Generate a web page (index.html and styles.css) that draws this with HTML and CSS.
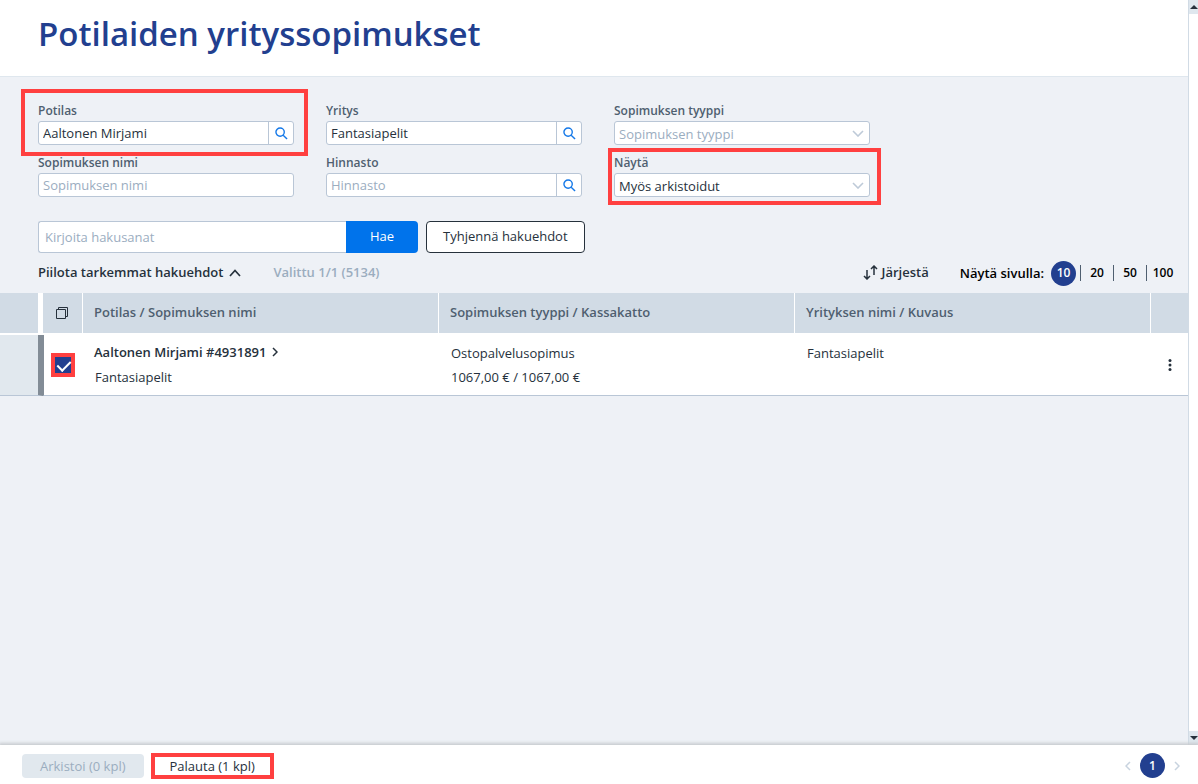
FILE: index.html
```html
<!DOCTYPE html>
<html lang="fi">
<head>
<meta charset="utf-8">
<meta name="viewport" content="width=device-width, initial-scale=1">
<title>Potilaiden yrityssopimukset</title>
<link rel="stylesheet" href="styles.css">
</head>
<body>
<div class="app">
  <div class="viewport">
    <main class="page">
      <header class="page-header"><h1 class="page-title">Potilaiden yrityssopimukset</h1></header>

      <form class="filters">
        <div class="field-grid">
          <div class="field field-marked-patient">
            <label class="field-label" for="patient">Potilas</label>
            <div class="lookup">
              <input class="lookup-input" id="patient" type="text" value="Aaltonen Mirjami">
              <button class="lookup-button" type="button" aria-label="Hae potilas"><svg class="icon-search" viewBox="0 0 14 14"><circle cx="5.5" cy="5.5" r="4.5"/><path d="M8.8 8.8 13 13"/></svg></button>
            </div>
          </div>
          <div class="field">
            <label class="field-label" for="company">Yritys</label>
            <div class="lookup">
              <input class="lookup-input" id="company" type="text" value="Fantasiapelit">
              <button class="lookup-button" type="button" aria-label="Hae yritys"><svg class="icon-search" viewBox="0 0 14 14"><circle cx="5.5" cy="5.5" r="4.5"/><path d="M8.8 8.8 13 13"/></svg></button>
            </div>
          </div>
          <div class="field">
            <label class="field-label" for="type">Sopimuksen tyyppi</label>
            <div class="lookup">
              <select class="select is-empty" id="type"><option>Sopimuksen tyyppi</option></select>
              <svg class="select-arrow" viewBox="0 0 12 7"><path d="M1 1l5 5 5-5"/></svg>
            </div>
          </div>
          <div class="field">
            <label class="field-label" for="name">Sopimuksen nimi</label>
            <div class="lookup"><input class="lookup-input" id="name" type="text" placeholder="Sopimuksen nimi"></div>
          </div>
          <div class="field">
            <label class="field-label" for="pricelist">Hinnasto</label>
            <div class="lookup">
              <input class="lookup-input" id="pricelist" type="text" placeholder="Hinnasto">
              <button class="lookup-button" type="button" aria-label="Hae hinnasto"><svg class="icon-search" viewBox="0 0 14 14"><circle cx="5.5" cy="5.5" r="4.5"/><path d="M8.8 8.8 13 13"/></svg></button>
            </div>
          </div>
          <div class="field field-marked-show">
            <label class="field-label" for="show">Näytä</label>
            <div class="lookup">
              <select class="select" id="show"><option>Myös arkistoidut</option></select>
              <svg class="select-arrow" viewBox="0 0 12 7"><path d="M1 1l5 5 5-5"/></svg>
            </div>
          </div>
        </div>

        <div class="search-row">
          <input class="search-input" type="text" placeholder="Kirjoita hakusanat" aria-label="Hakusanat">
          <button class="button-search" type="button">Hae</button>
          <button class="button-clear" type="button">Tyhjennä hakuehdot</button>
        </div>

        <div class="toolbar">
          <button class="text-button" type="button">Piilota tarkemmat hakuehdot
            <svg class="icon-up" viewBox="0 0 12 8"><path d="M1 7l5-5.500 5 5.500"/></svg>
          </button>
          <span class="selected-count">Valittu 1/1 (5134)</span>
          <button class="text-button sort-button" type="button">
            <svg class="icon-sort" viewBox="0 0 15 15"><path d="M4 5v9M1 11l3 3 3-3M11 10V1M8 4l3-3 3 3"/></svg>Järjestä</button>
          <div class="page-size">
            <span class="page-size-label">Näytä sivulla:</span>
            <button class="round-button" type="button">10</button>
            <button class="size-button" type="button">20</button>
            <button class="size-button" type="button">50</button>
            <button class="size-button" type="button">100</button>
          </div>
        </div>
      </form>

      <table class="contracts">
        <colgroup><col class="col-edge"><col class="col-check"><col><col><col><col class="col-menu"></colgroup>
        <thead>
          <tr>
            <th class="head-edge"></th>
            <th class="head-check"><button class="icon-button" type="button" aria-label="Valitse kaikki"><svg class="icon-copy" viewBox="0 0 12 12"><path d="M.5 2.500h9v9h-9zM2.500 2.500v-2h9v9h-2"/></svg></button></th>
            <th>Potilas / Sopimuksen nimi</th>
            <th>Sopimuksen tyyppi / Kassakatto</th>
            <th>Yrityksen nimi / Kuvaus</th>
            <th class="head-menu"></th>
          </tr>
        </thead>
        <tbody>
          <tr>
            <td class="row-edge"></td>
            <td class="row-check"><input class="checkbox" type="checkbox" checked aria-label="Valitse Aaltonen Mirjami"></td>
            <td><a class="patient-link" href="#">Aaltonen Mirjami #4931891<svg class="icon-next" viewBox="0 0 6 10"><path d="M1 1l4 4-4 4"/></svg></a><div class="line">Fantasiapelit</div></td>
            <td><div class="line">Ostopalvelusopimus</div><div class="line">1067,00 € / 1067,00 €</div></td>
            <td><div class="line">Fantasiapelit</div></td>
            <td class="row-menu"><button class="icon-button" type="button" aria-label="Toiminnot"><svg class="icon-dots" viewBox="0 0 4 14"><circle cx="2" cy="2.500" r="1.500"/><circle cx="2" cy="7" r="1.500"/><circle cx="2" cy="11.500" r="1.500"/></svg></button></td>
          </tr>
        </tbody>
      </table>
    </main>
    <div class="scrollbar" aria-hidden="true">
      <div class="scroll-end"><svg class="scroll-arrow" viewBox="0 0 8 4"><path d="M0 4l4-4 4 4z"/></svg></div>
      <div class="scroll-end"><svg class="scroll-arrow" viewBox="0 0 8 4"><path d="M0 0l4 4 4-4z"/></svg></div>
    </div>
  </div>

  <footer class="footer">
    <button class="button-archive" type="button" disabled>Arkistoi (0 kpl)</button>
    <button class="button-restore" type="button">Palauta (1 kpl)</button>
    <nav class="pager" aria-label="Sivut">
      <button class="icon-button" type="button" aria-label="Edellinen"><svg class="pager-arrow" viewBox="0 0 6 10"><path d="M5 1L1 5l4 4"/></svg></button>
      <button class="round-button" type="button">1</button>
      <button class="icon-button" type="button" aria-label="Seuraava"><svg class="pager-arrow" viewBox="0 0 6 10"><path d="M1 1l4 4-4 4"/></svg></button>
    </nav>
  </footer>
</div>
</body>
</html>
```
FILE: styles.css
```css
:root {
  --navy: #223f8f;
  --ink: #26313c;
  --muted: #9badbf;
  --line: #b9c6d6;
  --head: #d1dbe5;
  --mark: #ff4040;
}
* { box-sizing: border-box; }
body { margin: 0; font: 13px/24px "Open Sans", "Noto Sans", sans-serif; color: var(--ink); }
button, input, select { font: inherit; color: inherit; margin: 0; }
button { padding: 0; border: 0; background: none; white-space: nowrap; }
svg { display: block; fill: none; stroke: currentColor; flex: none; }

.app { display: flex; flex-direction: column; height: 100vh; }
.viewport { display: flex; flex: 1; min-height: 0; }
.page { flex: 1; min-width: 0; background: #eef1f6; overflow: hidden; }
.page-header { padding: 6px 38px 14px; background: #fff; border-bottom: 1px solid #dfe7ee; }
.page-title { margin: 0; font-size: 33px; line-height: 56px; font-weight: 600; color: var(--navy); }

.filters { padding: 26px 9px 6px 38px; }
.field-grid { display: grid; grid-template-columns: repeat(3, minmax(0, 256px)); gap: 10px 32px; }
.field { position: relative; display: flex; flex-direction: column; gap: 2px; }
.field-label { font-size: 12px; line-height: 16px; font-weight: 600; color: #4f5f70; }
.field-marked-patient::after, .field-marked-show::after { content: ""; position: absolute; border: 4px solid var(--mark); pointer-events: none; }
.field-marked-patient::after { inset: -14px -14px -11px -17px; }
.field-marked-show::after { inset: -7px -11px -8px -6px; }
.lookup { display: flex; position: relative; height: 24px; border: 1px solid var(--line); border-radius: 3px; background: #fff; overflow: hidden; }
.lookup-input { flex: 1; min-width: 0; border: 0; padding: 0 4px; background: none; }
.lookup-button { display: grid; place-items: center; width: 25px; border-left: 1px solid var(--line); color: #1478e8; }
.icon-search { width: 13px; height: 13px; stroke-width: 1.5; }
.select { flex: 1; min-width: 0; padding: 0 24px 2px 4px; border: 0; background: none; appearance: none; }
.is-empty, ::placeholder { color: var(--muted); opacity: 1; }
.select-arrow { position: absolute; right: 5px; top: 8px; width: 12px; height: 7px; color: #becad8; stroke-width: 1.6; pointer-events: none; }

.search-row { display: flex; height: 32px; margin-top: 24px; }
.search-input { flex: 0 1 308px; min-width: 0; padding: 0 6px; border: 1px solid var(--line); border-right: 0; border-radius: 3px 0 0 3px; background: #fff; }
.button-search { padding: 0 24px 2px; background: #0073eb; color: #fff; border-radius: 0 4px 4px 0; }
.button-clear { margin-left: 8px; padding: 0 16px 2px; border: 1px solid var(--ink); border-radius: 4px; background: #fff; }

.toolbar { display: flex; align-items: center; margin-top: 6px; height: 28px; }
.text-button { display: flex; align-items: center; gap: 6px; padding-bottom: 2px; font-weight: 600; }
.icon-up { width: 12px; height: 8px; margin-top: 2px; stroke-width: 1.7; }
.selected-count { margin-left: 32px; padding-bottom: 2px; font-weight: 600; color: var(--muted); }
.sort-button { margin-left: auto; gap: 4px; }
.icon-sort { width: 15px; height: 15px; stroke-width: 1.5; }
.page-size { display: flex; align-items: center; margin-left: 31px; color: #000; }
.page-size-label { margin-right: 7px; font-weight: 600; }
.round-button { width: 25px; height: 25px; border-radius: 50%; background: var(--navy); color: #fff; font-size: 12px; line-height: 24px; font-weight: 600; }
.size-button { width: 33px; height: 16px; border-left: 1px solid #4f5f70; font-size: 12px; line-height: 16px; font-weight: 600; }
.page-size .round-button { margin-right: 4px; }

.contracts { width: 100%; table-layout: fixed; border-spacing: 0; background: #fff; }
.col-edge { width: 43px; }
.col-check { width: 40px; }
.col-menu { width: 37px; }
th { height: 42px; padding: 0 11px 2px; background: var(--head); border-right: 1px solid #fff; border-bottom: 2px solid #fff; text-align: left; line-height: 16px; font-weight: 600; color: #4f5f70; white-space: nowrap; }
.head-edge { border-right: 5px solid #fff; }
.head-check { padding: 0 13px; }
.head-menu { border-right: 0; }
td { height: 61px; padding: 6px 12px 5px; border-bottom: 1px solid var(--line); vertical-align: top; }
.row-edge { background: #e1e8ee; border-right: 5px solid #828c96; }
.row-check { padding: 0 0 0 7px; border-left: 1px solid #828c96; vertical-align: middle; }
.row-menu { padding: 0; vertical-align: middle; }
.line { line-height: 24px; }
.patient-link { display: flex; align-items: center; gap: 6px; margin: -1px 0 1px -1px; color: inherit; font-weight: 600; text-decoration: none; white-space: nowrap; }
.icon-next { width: 6px; height: 10px; stroke-width: 1.5; }
.icon-button { display: grid; place-items: center; color: inherit; }
.icon-copy { width: 12px; height: 12px; color: var(--ink); }
.icon-dots { width: 4px; height: 14px; fill: var(--ink); stroke: none; }
.row-menu .icon-button { width: 100%; height: 24px; }
.checkbox { appearance: none; position: relative; display: block; width: 24px; height: 24px; border: 4px solid var(--mark); background: var(--navy); }
.checkbox:checked::after { content: ""; position: absolute; left: 5px; top: 1px; width: 6px; height: 11px; border: solid #fff; border-width: 0 2px 2px 0; rotate: 45deg; }

.scrollbar { display: flex; flex-direction: column; justify-content: space-between; width: 10px; border-left: 1px solid var(--head); background: #fff; }
.scroll-end { display: grid; place-items: center end; height: 14px; background: #dfe7ee; }
.scroll-arrow { width: 8px; height: 4px; fill: var(--ink); stroke: none; }

.footer { position: relative; display: flex; align-items: center; height: 39px; padding: 2px 18px 0 22px; background: #fff; box-shadow: 0 -1px 3px 1px #c8ccd0; }
.button-archive { height: 24px; padding: 0 18px 2px; border-radius: 4px; background: #e1e8ee; color: var(--muted); }
.button-restore { height: 26px; margin-left: 7px; padding: 0 15px; border: 4px solid var(--mark); line-height: 18px; }
.pager { display: flex; align-items: center; gap: 9px; margin-left: auto; }
.pager-arrow { width: 6px; height: 10px; color: #c8d3df; stroke-width: 1.5; }
```
